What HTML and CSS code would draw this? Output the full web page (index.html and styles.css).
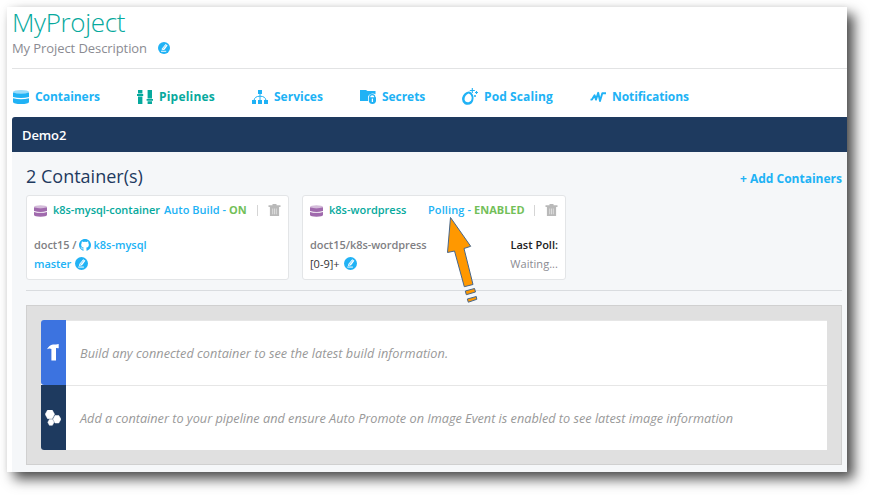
FILE: index.html
```html
<!DOCTYPE html>
<html lang="en">
<head>
<meta charset="utf-8">
<title>MyProject</title>
<link rel="stylesheet" href="styles.css">
</head>
<body>
<svg class="defs" width="0" height="0" aria-hidden="true">
  <symbol id="db" viewBox="0 0 16 14"><ellipse cx="8" cy="2" rx="8" ry="2" opacity=".45"/><path d="M0 2.4Q8 5 16 2.4V7Q8 9.2 0 7Z"/><path d="M0 8.2Q8 10.4 16 8.2V12Q15.5 14 8 14T0 12Z"/></symbol>
  <symbol id="edit" viewBox="0 0 12 12"><circle cx="6" cy="6" r="6"/><path d="M4 6.5 7.6 2 9.6 3.4 6.5 7.7 3.7 8.2Z" fill="#fff"/><path d="M4.6 7.4 8 3.2" stroke="#20aef5" stroke-width=".5"/><path d="M3 9.3H8.2" stroke="#fff" stroke-width=".9"/></symbol>
  <symbol id="trash" viewBox="0 0 12 12"><path d="M4 1.2V0H8V1.2H12V3H0V1.2ZM1.4 3H10.6V12H1.4Z"/><path d="M4.2 4.5V10.3M6 4.5V10.3M7.8 4.5V10.3" stroke="#fff" stroke-width=".5"/></symbol>
</svg>
<main class="frame">
  <header class="head">
    <h1>MyProject</h1>
    <div class="desc"><span>My Project Description</span><svg class="pen"><use href="#edit"/></svg></div>
  </header>
  <nav class="tabs">
    <a class="tab tab-containers"><svg viewBox="0 0 16 14"><use href="#db"/></svg><span>Containers</span></a>
    <a class="tab tab-pipelines"><svg viewBox="0 0 16 14"><path d="M1 0H5.4V3.4H1ZM0 4H6.2V6H0ZM1 6.6H5.4V14H1ZM10.6 0H15V8.6H10.6ZM9.6 9H16V10.8H9.6ZM10.6 11.2H15V14H10.6Z"/></svg><span>Pipelines</span></a>
    <a class="tab tab-services"><svg viewBox="0 0 16 14"><path d="M6 0H10V4H6ZM0 10H4V14H0ZM6 10H10V14H6ZM12 10H16V14H12Z"/><path d="M8 3V11M2 10.5Q2.5 6.2 8 6.2T14 10.5" fill="none" stroke="currentColor"/></svg><span>Services</span></a>
    <a class="tab tab-secrets"><svg viewBox="0 0 16 14"><path d="M0 0H6L7.5 1H15.5V4.2Q12.5 2.6 9.7 4.6 8 6 8 7V11H0Z"/><path d="M9.7 8V6.8Q9.8 4.7 12.2 4.7T14.8 6.8V8" fill="none" stroke="currentColor" stroke-width="1.2"/><path d="M8.8 7.3H16V11Q15.5 14 12.4 14T8.8 11Z"/><path d="M12.4 8.6V12" stroke="#fff" stroke-width="1.3"/></svg><span>Secrets</span></a>
    <a class="tab tab-scaling"><svg viewBox="0 0 16 17"><path fill-rule="evenodd" d="M6.5 3.5Q10 3.5 11.3 8 12.2 12.5 9.8 15.2 6.8 17.6 2.8 16.2-.6 14 .2 9.6 1.8 4.6 6.5 3.5ZM6.5 5.4Q2.8 7 2.5 11.2 3 14.6 6.6 14.2 9.8 13.4 9.7 9.6 9 6 6.5 5.4Z"/><path d="M10.3 0V5M7.8 2.5H12.8M14.5 3V6M13 4.5H16M13 7V9M12 8H14" stroke="currentColor" stroke-width="1.1"/></svg><span>Pod Scaling</span></a>
    <a class="tab tab-notify"><svg viewBox="0 0 16 12"><path d="M.5 8.6H2L4.6 4.2 6 8.6 8.2 1.8 10 10 12.3 2.3H16" fill="none" stroke="currentColor" stroke-width="1.9" stroke-linejoin="round"/></svg><span>Notifications</span></a>
  </nav>
  <section class="panel">
    <div class="bar"><span>Demo2</span></div>
    <div class="body">
      <div class="heading"><h2>2 Container(s)</h2><a class="add">+ Add Containers</a></div>
      <div class="cards">
        <article class="card">
          <div class="row top"><svg class="dbi"><use href="#db"/></svg><span class="name n1">k8s-mysql-container</span><span class="link auto">Auto Build -</span><b class="on">ON</b><i class="sep"></i><svg class="bin"><use href="#trash"/></svg></div>
          <div class="row repo"><span class="muted owner">doct15 /</span><svg class="hub" viewBox="0 0 16 16"><path d="M8 0C3.58 0 0 3.58 0 8c0 3.54 2.29 6.53 5.47 7.59.4.07.55-.17.55-.38V13.7c-2.23.48-2.7-.95-2.7-.95-.36-.93-.89-1.18-.89-1.18-.73-.5.05-.49.05-.49.81.06 1.23.83 1.23.83.72 1.23 1.88.87 2.34.67.07-.52.28-.87.51-1.07-1.78-.2-3.65-.89-3.65-3.95 0-.88.31-1.59.82-2.15-.08-.2-.36-1.02.08-2.12 0 0 .67-.22 2.2.82a7.5 7.5 0 0 1 4 0c1.53-1.04 2.2-.82 2.2-.82.44 1.1.16 1.92.08 2.12.51.56.82 1.27.82 2.15 0 3.07-1.87 3.75-3.65 3.95.29.25.54.73.54 1.48v2.2c0 .21.15.46.55.38A8 8 0 0 0 16 8c0-4.42-3.58-8-8-8z"/></svg><span class="link mysql">k8s-mysql</span></div>
          <div class="row tag"><span class="link master">master</span><svg class="pen"><use href="#edit"/></svg></div>
        </article>
        <article class="card">
          <div class="row top"><svg class="dbi"><use href="#db"/></svg><span class="name n2">k8s-wordpress</span><span class="link poll">Polling -</span><b class="on enabled">ENABLED</b><i class="sep"></i><svg class="bin"><use href="#trash"/></svg></div>
          <div class="row repo"><span class="muted wp">doct15/k8s-wordpress</span><span class="last">Last Poll:</span></div>
          <div class="row tag"><span class="regex">[0-9]+</span><svg class="pen"><use href="#edit"/></svg><span class="wait">Waiting...</span></div>
        </article>
      </div>
      <div class="events">
        <div class="event"><div class="badge build"><svg width="12" height="17" viewBox="0 0 12 17"><path d="M0 5.2Q2 1.2 6 .5L9 .6 11.7 0V4.3L9 4V16.5H4.4V5Q2.4 4 0 5.2Z"/></svg></div><p class="p1">Build any connected container to see the latest build information.</p></div>
        <div class="event"><div class="badge image"><svg width="16" height="16" viewBox="0 0 16 16"><path d="M2.6 0H7.2L9.6 4.3 7.2 8.7H2.6L.2 4.3ZM10.1 5.5H13.8L16 9.2 13.8 13H10.1L8 9.2ZM4.4 9.5H7.4L9 12.3 7.4 15.3H4.4L2.8 12.3Z" stroke="#fff" stroke-width=".5"/></svg></div><p class="p2">Add a container to your pipeline and ensure Auto Promote on Image Event is enabled to see latest image information</p></div>
      </div>
    </div>
  </section>
</main>
<svg class="arrow" width="40" height="90" viewBox="0 0 40 90"><path d="M10.5 2.5 30.7 31.3 24 33.5 33 69.5 24.3 71.7 14.5 36 7.5 37.5ZM25.3 76 34.5 73.5 35.5 77 26.3 79.7ZM27.3 84 36.3 81.5 36.8 84.3 28.3 87.2Z"/></svg>
</body>
</html>
```
FILE: styles.css
```css
* { box-sizing: border-box; }
body { margin: 0; padding: 7px 0 0 7px; height: 495px; overflow: hidden; background: #fff; font: 13px/18px "Open Sans", sans-serif; color: #20b2f5; position: relative; }
svg { display: block; flex: none; fill: currentColor; }
.defs { position: absolute; }
h1, h2, p { margin: 0; font-weight: 400; }
span, b, h1, h2, p, .add { white-space: nowrap; }
.frame { width: 840px; height: 465px; padding-left: 5px; background: #fff; box-shadow: 7px 7px 12px rgba(0,0,0,.7), 0 0 6px rgba(0,0,0,.05); display: flex; flex-direction: column; }
.head { height: 62px; border-bottom: 1px solid #e2e3e4; }
h1 { font-size: 26px; line-height: 31px; height: 32px; font-weight: 300; letter-spacing: -.35px; color: #06a99d; }
.desc { display: flex; align-items: center; height: 18px; color: #8b8b92; letter-spacing: -.08px; }
.desc .pen { margin-left: 11px; color: #20b2f5; }
.pen { width: 12px; height: 12px; }
.tabs { height: 48px; padding: 7px 0 0 1px; display: flex; align-items: center; font-size: 12px; font-weight: 700; }
.tab { display: flex; align-items: center; gap: 6px; }
.tab svg { width: 16px; height: 14px; }
.tab-containers { width: 124px; letter-spacing: -.05px; }
.tab-pipelines { width: 115px; color: #06a99d; letter-spacing: .2px; }
.tab-services { width: 108px; }
.tab-secrets { width: 102px; letter-spacing: -.05px; }
.tab-scaling { width: 128px; letter-spacing: .1px; }
.tab-scaling svg { height: 17px; }
.tab-notify { letter-spacing: -.08px; }
.panel { flex: 1; background: #f5f7f9; border-radius: 3px 0 0 0; }
.bar { height: 35px; padding-left: 10px; display: flex; align-items: center; background: #1e3a5f; color: #fff; font-weight: 600; letter-spacing: -.1px; border-radius: 3px 0 0 0; }
.body { padding: 9px 5px 0 14px; }
.heading { height: 34px; display: flex; justify-content: space-between; }
h2 { font-size: 18px; line-height: 30px; color: #1e3a5f; }
.add { font-size: 12px; font-weight: 700; line-height: 35px; }
.cards { height: 96px; display: flex; gap: 13px; align-items: flex-start; border-bottom: 1px solid #d9dcdf; }
.card { width: 263px; height: 85px; padding: 4px 7px 0; background: #fff; border: 1px solid #e3e5e7; border-radius: 3px; font-size: 11px; }
.card + .card { width: 264px; }
.row { display: flex; align-items: center; height: 19px; font-weight: 600; }
.top { margin-bottom: 16px; }
.dbi { width: 13px; height: 12px; color: #a06aad; margin-right: 6px; position: relative; top: 1px; }
.name { color: #06a99d; }
.n1 { width: 111px; letter-spacing: -.04px; }
.n2 { width: 99px; }
.auto { letter-spacing: .02px; }
.poll { letter-spacing: .1px; }
.on { color: #73bf59; margin-left: 3px; font-weight: 700; }
.sep { width: 1px; height: 11px; background: #d5d5d5; margin-left: auto; margin-right: 10px; position: relative; top: 1px; }
.bin { width: 13px; height: 12px; color: #b9b9b9; }
.muted { color: #7f7f84; }
.owner { letter-spacing: -.08px; }
.wp { letter-spacing: -.05px; }
.hub { width: 12px; height: 12px; margin: 0 2px 0 3px; }
.tag .pen { width: 13px; height: 13px; margin-left: 4px; }
.master { letter-spacing: -.1px; }
.regex { color: #333; font-weight: 500; }
.last { margin-left: auto; color: #222; }
.wait { margin-left: auto; color: #8b8b92; font-weight: 400; letter-spacing: .05px; }
.events { margin-top: 14px; height: 160px; padding: 14px; background: #e0e0e0; border: 1px solid #d0d0d0; }
.event { height: 65px; display: flex; align-items: center; background: #fff; border-top: 1px solid #e6e6e6; border-radius: 3px 0 0 0; }
.event + .event { border-radius: 0 0 0 3px; }
.badge { width: 25px; height: 65px; padding-right: 2px; margin-top: -1px; display: flex; align-items: center; justify-content: center; color: #fff; border-radius: 3px 0 0 3px; }
.build { background: #3c73e0; }
.image { background: #1e3a5f; border-radius: 0 0 0 3px; }
.event p { margin-left: 14px; font-size: 12.7px; font-style: italic; color: #999; }
.p1 { letter-spacing: .04px; }
.arrow { position: absolute; left: 440px; top: 215px; fill: #ff9800; stroke: #47678c; stroke-width: 1; }
```
